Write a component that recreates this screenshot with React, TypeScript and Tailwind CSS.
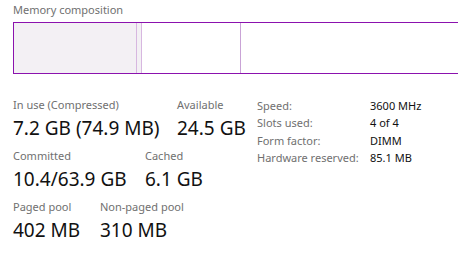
import React from 'react';

const stats = [
  { cells: [{ label: 'In use (Compressed)', value: '7.2 GB (74.9 MB)' }, { label: 'Available', value: '24.5 GB' }], first: 'w-[164px]' },
  { cells: [{ label: 'Committed', value: '10.4/63.9 GB' }, { label: 'Cached', value: '6.1 GB' }], first: 'w-[132px]' },
  { cells: [{ label: 'Paged pool', value: '402 MB' }, { label: 'Non-paged pool', value: '310 MB' }], first: 'w-[87px]' },
];

const details = [
  ['Speed:', '3600 MHz'],
  ['Slots used:', '4 of 4'],
  ['Form factor:', 'DIMM'],
  ['Hardware reserved:', '85.1 MB'],
];

const App: React.FC = () => {
  return (
    <div className="w-[458px] h-[269px] overflow-hidden bg-white pl-[13px] font-['Noto_Sans',sans-serif]">
      <div className="pt-[2px] text-[11px] leading-[16px] text-[#707070]">Memory composition</div>

      {/* composition bar */}
      <div className="mt-[4px] flex h-[52px] border-y border-l border-[#8b12ae]">
        <div className="w-[123px] shrink-0 border-r border-[#d7b7e0] bg-[#f3f0f4]"></div>
        <div className="w-[5px] shrink-0 border-r border-[#d7b7e0] bg-[#f3f0f4]"></div>
        <div className="w-[99px] shrink-0 border-r border-[#c9a3d6]"></div>
        <div className="flex-1"></div>
      </div>

      <div className="mt-[23px] flex items-start">
        <div className="w-[244px] shrink-0">
          {stats.map((row, i) => (
            <div key={i} className="mb-[8px] flex">
              {row.cells.map((c, j) => (
                <div key={j} className={j === 0 ? `${row.first} shrink-0` : 'whitespace-nowrap'}>
                  <div className="text-[11px] leading-[16px] text-[#707070] whitespace-nowrap">{c.label}</div>
                  <div className="mt-[3px] text-[19px] leading-[24px] text-[#111] whitespace-nowrap">{c.value}</div>
                </div>
              ))}
            </div>
          ))}
        </div>

        <div className="grid grid-cols-[113px_auto] content-start text-[11px] leading-[17.25px]">
          {details.map(([k, v]) => (
            <React.Fragment key={k}>
              <div className="text-[#707070] whitespace-nowrap">{k}</div>
              <div className="text-[#111] whitespace-nowrap">{v}</div>
            </React.Fragment>
          ))}
        </div>
      </div>
    </div>
  );
};

export default App;
